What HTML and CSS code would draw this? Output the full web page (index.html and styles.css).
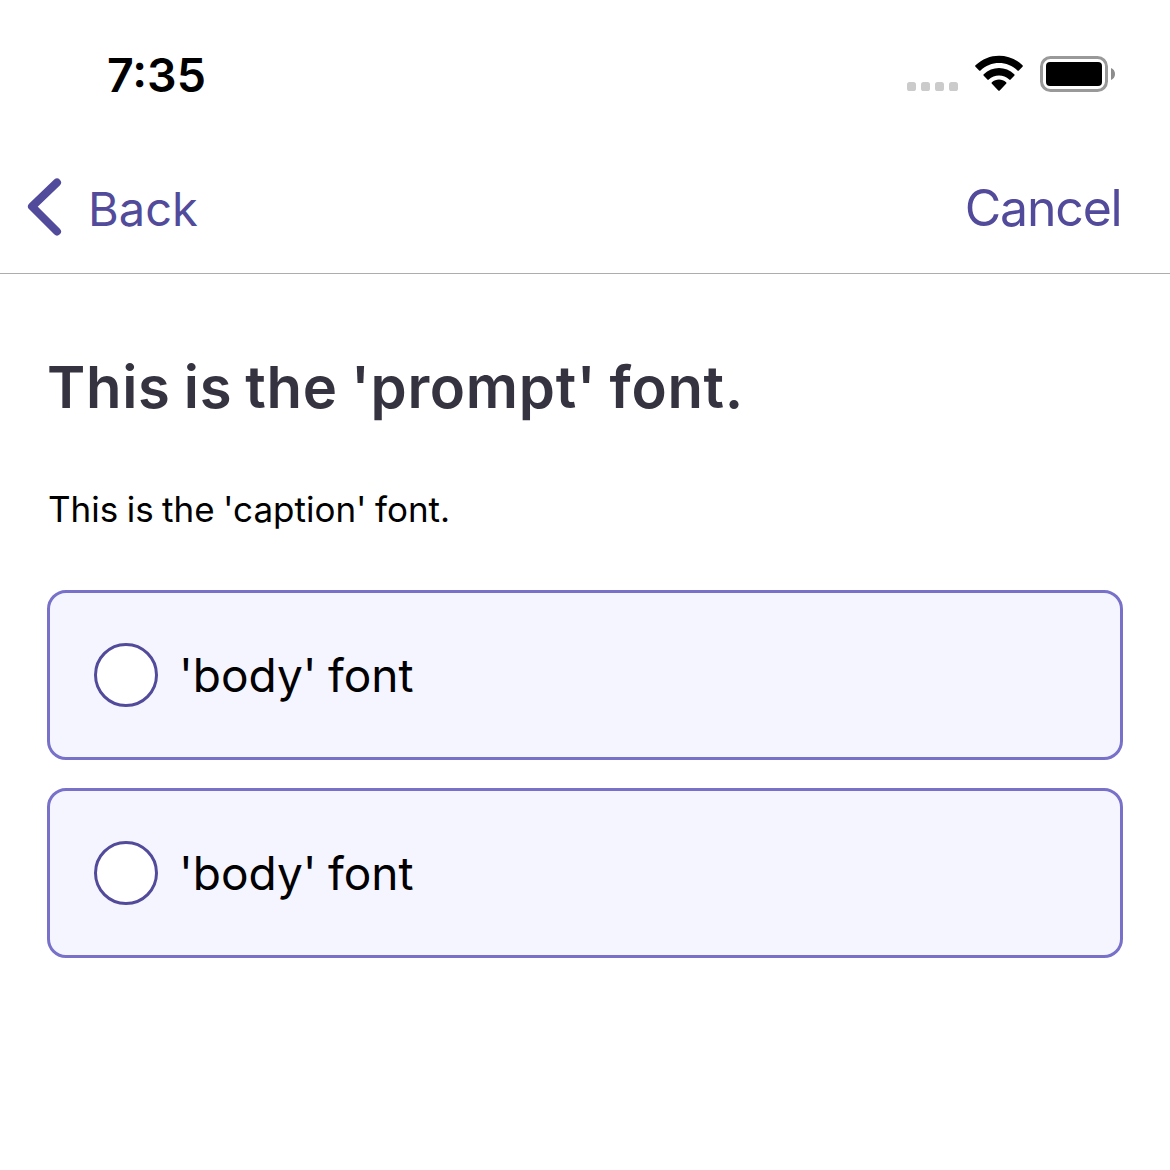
FILE: index.html
```html
<!DOCTYPE html>
<html lang="en">
<head>
<meta charset="utf-8">
<title>Survey</title>
<link rel="stylesheet" href="styles.css">
</head>
<body>
<div class="status">
  <span class="time">7:35</span>
  <svg class="indicators" width="210" height="40" viewBox="0 0 210 40" aria-hidden="true">
    <g fill="#cbcbcb">
      <rect x="1" y="28" width="9" height="9" rx="2.6"/>
      <rect x="15" y="28" width="9" height="9" rx="2.6"/>
      <rect x="29" y="28" width="9" height="9" rx="2.6"/>
      <rect x="43" y="28" width="9" height="9" rx="2.6"/>
    </g>
    <path transform="translate(93 1.200) scale(1.045 1.070) translate(-93 -1.200)" d="M93 8.500c6.600 0 12.900 2.500 17.700 7 .4.400 1 .400 1.300 0l3.500-3.500c.400-.400.400-1 0-1.400-12.600-12-32.400-12-45 0-.4.400-.4 1 0 1.400l3.500 3.500c.3.400.9.400 1.300 0 4.800-4.500 11.100-7 17.700-7zm0 11.700c3.600 0 7.100 1.400 9.800 3.800.4.400 1 .4 1.300 0l3.500-3.500c.4-.4.4-1 0-1.400-8.200-7.800-21-7.800-29.200 0-.4.400-.4 1 0 1.400l3.500 3.500c.3.400.9.400 1.300 0 2.700-2.400 6.200-3.800 9.800-3.800zm6.800 7.700c.4-.4.4-1 0-1.400-3.900-3.400-9.700-3.400-13.600 0-.4.400-.4 1 0 1.400l6.100 6.200c.4.400 1 .4 1.400 0z"/>
    <rect x="135.500" y="3.500" width="65" height="33" rx="9" fill="none" stroke="#999" stroke-width="3"/>
    <rect x="140" y="8" width="56" height="24" rx="4"/>
    <path d="M205 14c2.500 1 4 3.200 4 6s-1.500 5-4 6z" fill="#8c8c8c"/>
  </svg>
</div>
<header class="nav">
  <a class="back">
    <svg width="36" height="60" viewBox="0 0 36 60" aria-hidden="true"><path d="M30 5.500L5 29.500L30 54.500" fill="none" stroke="#524a9a" stroke-width="8" stroke-linecap="round" stroke-linejoin="round"/></svg>
    <span class="back-label">Back</span>
  </a>
  <a class="cancel">Cancel</a>
</header>
<main>
  <h1 class="prompt">This is the 'prompt' font.</h1>
  <p class="caption">This is the 'caption' font.</p>
  <div class="options">
    <div class="option"><span class="radio"></span><span class="option-label">'body' font</span></div>
    <div class="option"><span class="radio"></span><span class="option-label">'body' font</span></div>
  </div>
</main>
</body>
</html>
```
FILE: styles.css
```css
* { box-sizing: border-box; }
body {
  margin: 0;
  height: 1170px;
  overflow: hidden;
  background: #fff;
  color: #000;
  font-family: Inter, "Liberation Sans", sans-serif;
  white-space: nowrap;
}
.status {
  display: flex;
  justify-content: space-between;
  align-items: flex-start;
  height: 150px;
  padding: 45px 54px 0 107px;
}
.time { font-size: 46.500px; line-height: 60px; font-weight: 600; }
.indicators { margin-top: 9px; }
.nav {
  display: flex;
  justify-content: space-between;
  align-items: center;
  height: 124px;
  padding: 0 48.500px 9px 27px;
  border-bottom: 1px solid #adadad;
  color: #524a9a;
}
.back { display: flex; align-items: center; gap: 25px; }
.back-label { font-size: 47px; line-height: 60px; padding-top: 4px; }
.cancel {
  font-size: 50px;
  line-height: 60px;
  padding-top: 1px;
  letter-spacing: -1.200px;
}
main { padding: 77px 47px 0; }
.prompt {
  margin: 0;
  font-size: 58px;
  line-height: 72px;
  font-weight: 600;
  letter-spacing: 0.700px;
  word-spacing: -2.200px;
  color: #353340;
}
.caption {
  margin: 61px 0 0 1px;
  font-size: 35px;
  line-height: 50px;
  word-spacing: -1.400px;
}
.options { display: flex; flex-direction: column; gap: 28px; margin-top: 56px; }
.option {
  display: flex;
  align-items: center;
  gap: 21px;
  height: 170px;
  padding-left: 44px;
  border: 3px solid #7871c9;
  border-radius: 19px;
  background: #f5f5ff;
}
.radio {
  width: 64px;
  height: 64px;
  border: 3px solid #524a9a;
  border-radius: 50%;
  background: #fff;
}
.option-label { font-size: 46px; line-height: 60px; word-spacing: -1.500px; }
```
